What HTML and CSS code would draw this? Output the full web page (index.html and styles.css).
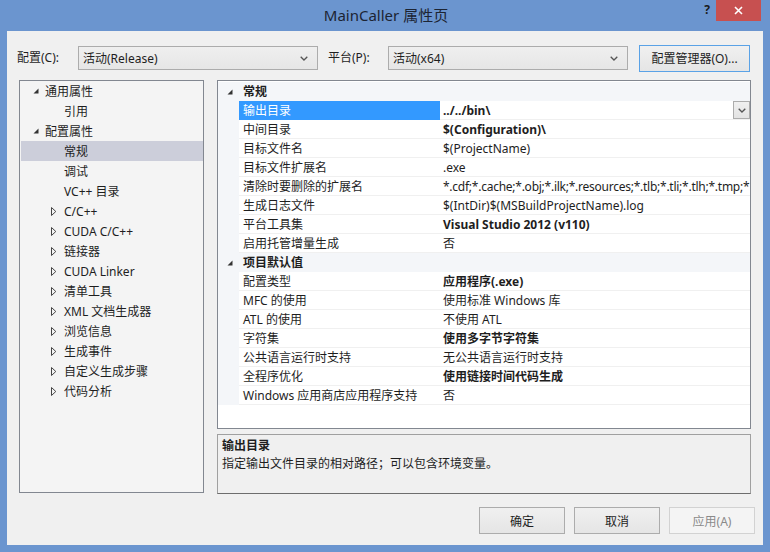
FILE: index.html
```html
<!DOCTYPE html>
<html lang="zh-CN">
<head>
<meta charset="utf-8">
<title>MainCaller 属性页</title>
<link rel="stylesheet" href="styles.css">
</head>
<body>
<div class="window">
  <div class="titlebar">
    <div class="title">MainCaller 属性页</div>
    <div class="help">?</div>
    <div class="close">
      <svg width="9" height="9" viewBox="0 0 9 9"><path d="M1 1 L8 8 M8 1 L1 8" stroke="#fff" stroke-width="1.6" fill="none"/></svg>
    </div>
  </div>
  <div class="client">
    <div class="toolbar">
      <div class="label">配置(C):</div>
      <div class="combo"><span>活动(Release)</span>
        <svg class="chev" width="8" height="5" viewBox="0 0 8 5"><polyline points="0.7,0.7 4,4 7.3,0.7" stroke="#555" stroke-width="1.3" fill="none"/></svg>
      </div>
      <div class="label label2">平台(P):</div>
      <div class="combo"><span>活动(x64)</span>
        <svg class="chev" width="8" height="5" viewBox="0 0 8 5"><polyline points="0.7,0.7 4,4 7.3,0.7" stroke="#555" stroke-width="1.3" fill="none"/></svg>
      </div>
      <div class="btn btn-focus mgr">配置管理器(O)...</div>
    </div>
    <div class="main">
      <div class="tree">
        <div class="node l0"><span class="arrow"><svg width="6" height="6" viewBox="0 0 6 6"><polygon points="5.5,0.5 5.5,5.5 0.5,5.5" fill="#333"/></svg></span>通用属性</div>
        <div class="node l1"><span class="arrow"></span>引用</div>
        <div class="node l0"><span class="arrow"><svg width="6" height="6" viewBox="0 0 6 6"><polygon points="5.5,0.5 5.5,5.5 0.5,5.5" fill="#333"/></svg></span>配置属性</div>
        <div class="node l1 sel"><span class="arrow"></span>常规</div>
        <div class="node l1"><span class="arrow"></span>调试</div>
        <div class="node l1"><span class="arrow"></span>VC++ 目录</div>
        <div class="node l1"><span class="arrow"><svg width="6" height="9" viewBox="0 0 6 9"><polygon points="0.5,0.5 4.8,4.5 0.5,8.5" fill="none" stroke="#444"/></svg></span>C/C++</div>
        <div class="node l1"><span class="arrow"><svg width="6" height="9" viewBox="0 0 6 9"><polygon points="0.5,0.5 4.8,4.5 0.5,8.5" fill="none" stroke="#444"/></svg></span>CUDA C/C++</div>
        <div class="node l1"><span class="arrow"><svg width="6" height="9" viewBox="0 0 6 9"><polygon points="0.5,0.5 4.8,4.5 0.5,8.5" fill="none" stroke="#444"/></svg></span>链接器</div>
        <div class="node l1"><span class="arrow"><svg width="6" height="9" viewBox="0 0 6 9"><polygon points="0.5,0.5 4.8,4.5 0.5,8.5" fill="none" stroke="#444"/></svg></span>CUDA Linker</div>
        <div class="node l1"><span class="arrow"><svg width="6" height="9" viewBox="0 0 6 9"><polygon points="0.5,0.5 4.8,4.5 0.5,8.5" fill="none" stroke="#444"/></svg></span>清单工具</div>
        <div class="node l1"><span class="arrow"><svg width="6" height="9" viewBox="0 0 6 9"><polygon points="0.5,0.5 4.8,4.5 0.5,8.5" fill="none" stroke="#444"/></svg></span>XML 文档生成器</div>
        <div class="node l1"><span class="arrow"><svg width="6" height="9" viewBox="0 0 6 9"><polygon points="0.5,0.5 4.8,4.5 0.5,8.5" fill="none" stroke="#444"/></svg></span>浏览信息</div>
        <div class="node l1"><span class="arrow"><svg width="6" height="9" viewBox="0 0 6 9"><polygon points="0.5,0.5 4.8,4.5 0.5,8.5" fill="none" stroke="#444"/></svg></span>生成事件</div>
        <div class="node l1"><span class="arrow"><svg width="6" height="9" viewBox="0 0 6 9"><polygon points="0.5,0.5 4.8,4.5 0.5,8.5" fill="none" stroke="#444"/></svg></span>自定义生成步骤</div>
        <div class="node l1"><span class="arrow"><svg width="6" height="9" viewBox="0 0 6 9"><polygon points="0.5,0.5 4.8,4.5 0.5,8.5" fill="none" stroke="#444"/></svg></span>代码分析</div>
      </div>
      <div class="right">
        <div class="grid">
          <div class="cat"><span class="gut"><svg width="6" height="6" viewBox="0 0 6 6"><polygon points="5.5,0.5 5.5,5.5 0.5,5.5" fill="#333"/></svg></span><span class="catname">常规</span></div>
          <div class="row"><span class="gut"></span><span class="name selname">输出目录</span><span class="val b">../../bin\<span class="ddbtn"><svg width="8" height="5" viewBox="0 0 8 5"><polyline points="0.7,0.7 4,4 7.3,0.7" stroke="#555" stroke-width="1.3" fill="none"/></svg></span></span></div>
          <div class="row"><span class="gut"></span><span class="name">中间目录</span><span class="val b">$(Configuration)\</span></div>
          <div class="row"><span class="gut"></span><span class="name">目标文件名</span><span class="val">$(ProjectName)</span></div>
          <div class="row"><span class="gut"></span><span class="name">目标文件扩展名</span><span class="val">.exe</span></div>
          <div class="row"><span class="gut"></span><span class="name">清除时要删除的扩展名</span><span class="val tight">*.cdf;*.cache;*.obj;*.ilk;*.resources;*.tlb;*.tli;*.tlh;*.tmp;*</span></div>
          <div class="row"><span class="gut"></span><span class="name">生成日志文件</span><span class="val">$(IntDir)$(MSBuildProjectName).log</span></div>
          <div class="row"><span class="gut"></span><span class="name">平台工具集</span><span class="val b">Visual Studio 2012 (v110)</span></div>
          <div class="row"><span class="gut"></span><span class="name">启用托管增量生成</span><span class="val">否</span></div>
          <div class="cat"><span class="gut"><svg width="6" height="6" viewBox="0 0 6 6"><polygon points="5.5,0.5 5.5,5.5 0.5,5.5" fill="#333"/></svg></span><span class="catname">项目默认值</span></div>
          <div class="row"><span class="gut"></span><span class="name">配置类型</span><span class="val b">应用程序(.exe)</span></div>
          <div class="row"><span class="gut"></span><span class="name">MFC 的使用</span><span class="val">使用标准 Windows 库</span></div>
          <div class="row"><span class="gut"></span><span class="name">ATL 的使用</span><span class="val">不使用 ATL</span></div>
          <div class="row"><span class="gut"></span><span class="name">字符集</span><span class="val b">使用多字节字符集</span></div>
          <div class="row"><span class="gut"></span><span class="name">公共语言运行时支持</span><span class="val">无公共语言运行时支持</span></div>
          <div class="row"><span class="gut"></span><span class="name">全程序优化</span><span class="val b">使用链接时间代码生成</span></div>
          <div class="row"><span class="gut"></span><span class="name">Windows 应用商店应用程序支持</span><span class="val">否</span></div>
        </div>
        <div class="desc">
          <div class="desc-title">输出目录</div>
          <div class="desc-text">指定输出文件目录的相对路径；可以包含环境变量。</div>
        </div>
      </div>
    </div>
    <div class="buttons">
      <div class="btn">确定</div>
      <div class="btn">取消</div>
      <div class="btn disabled">应用(A)</div>
    </div>
  </div>
</div>
</body>
</html>
```
FILE: styles.css
```css
* { box-sizing: border-box; }
html, body { margin: 0; padding: 0; }
body {
  width: 770px;
  height: 552px;
  overflow: hidden;
  font-family: "Noto Sans", "Noto Sans CJK SC", sans-serif;
  font-size: 12px;
  color: #1e1e1e;
}
.window {
  width: 770px;
  height: 552px;
  background: #6b95cf;
  padding: 0 7px 7px 7px;
  display: flex;
  flex-direction: column;
}
.titlebar {
  height: 31px;
  display: flex;
  align-items: flex-start;
  flex: none;
}
.title {
  flex: 1;
  text-align: center;
  padding-left: 66px;
  padding-top: 5px;
  font-size: 15px;
  line-height: 20px;
  color: #1c2433;
}
.help {
  width: 16px;
  margin-top: 2px;
  margin-right: 1px;
  font-weight: bold;
  font-size: 12px;
  line-height: 16px;
  color: #1a1a1a;
  text-align: center;
}
.close {
  width: 45px;
  height: 21px;
  background: #c75050;
  margin-right: 2px;
  display: flex;
  align-items: center;
  justify-content: center;
}
.client {
  flex: 1;
  background: #f0f0f0;
  display: flex;
  flex-direction: column;
}
.toolbar {
  margin-top: 13px;
  height: 28px;
  display: flex;
  align-items: center;
  padding-left: 10px;
}
.label {
  width: 61px;
  line-height: 16px;
}
.label2 { margin-left: 10px; width: 60px; }
.combo {
  width: 240px;
  height: 24px;
  border: 1px solid #acacac;
  background: linear-gradient(#efefef, #e6e6e6);
  display: flex;
  align-items: center;
  justify-content: space-between;
  padding: 0 9px 0 4px;
}
.chev { display: block; }
.btn {
  height: 27px;
  border: 1px solid #acacac;
  background: linear-gradient(#f0f0f0, #e5e5e5);
  display: flex;
  align-items: center;
  justify-content: center;
  width: 86px;
}
.mgr {
  width: 111px;
  margin-left: 11px;
}
.btn-focus { border-color: #5aa2e6; }
.btn.disabled {
  color: #8a8a8a;
  border-color: #d2d2d2;
  background: #f4f4f4;
}
.main {
  margin-top: 8px;
  display: flex;
  padding-left: 12px;
  gap: 13px;
}
.tree {
  width: 185px;
  height: 413px;
  border: 1px solid #828790;
  background: #f4f4f4;
  padding-top: 0;
}
.node {
  height: 20px;
  display: flex;
  align-items: center;
  white-space: nowrap;
}
.node.l0 { padding-left: 13px; }
.node.l1 { padding-left: 30px; }
.node .arrow {
  width: 14px;
  display: flex;
  align-items: center;
}
.node.l0 .arrow { width: 12px; }
.node.l1 .arrow { padding-left: 1px; }
.node.sel { background: #ccceda; margin: 0 0 0 1px; padding-left: 29px; }
.right {
  width: 534px;
  display: flex;
  flex-direction: column;
  gap: 5px;
}
.grid {
  height: 349px;
  border: 1px solid #828790;
  background: #fff;
  padding-top: 1px;
  overflow: hidden;
}
.row, .cat {
  height: 19px;
  display: flex;
  white-space: nowrap;
}
.cat { background: #f4f6f9; }
.gut {
  width: 21px;
  flex: none;
  background: #f4f6f9;
  display: flex;
  align-items: center;
  padding-left: 9px;
}
.catname {
  font-weight: bold;
  padding-left: 4px;
  line-height: 19px;
}
.name {
  width: 201px;
  flex: none;
  padding-left: 4px;
  line-height: 19px;
  border-bottom: 1px solid #f0f0f0;
}
.selname { background: #3399ff; color: #fff; border-bottom-color: #3399ff; }
.val {
  flex: 1;
  min-width: 0;
  overflow: hidden;
  padding-left: 3px;
  line-height: 19px;
  border-bottom: 1px solid #f0f0f0;
  position: relative;
}
.val.tight { letter-spacing: -0.25px; }
.b { font-weight: bold; }
.ddbtn {
  position: absolute;
  right: 0;
  top: 0;
  width: 17px;
  height: 18px;
  border: 1px solid #acacac;
  background: linear-gradient(#f0f0f0, #e3e3e3);
  display: flex;
  align-items: center;
  justify-content: center;
}
.desc {
  height: 60px;
  border: 1px solid #a0a0a0;
  border-bottom-color: #6d6d6d;
  background: #f0f0f0;
  padding: 2px 4px;
  line-height: 18px;
}
.desc-title { font-weight: bold; }
.buttons {
  margin-top: 13px;
  display: flex;
  justify-content: flex-end;
  gap: 9px;
  padding-right: 8px;
}
```
